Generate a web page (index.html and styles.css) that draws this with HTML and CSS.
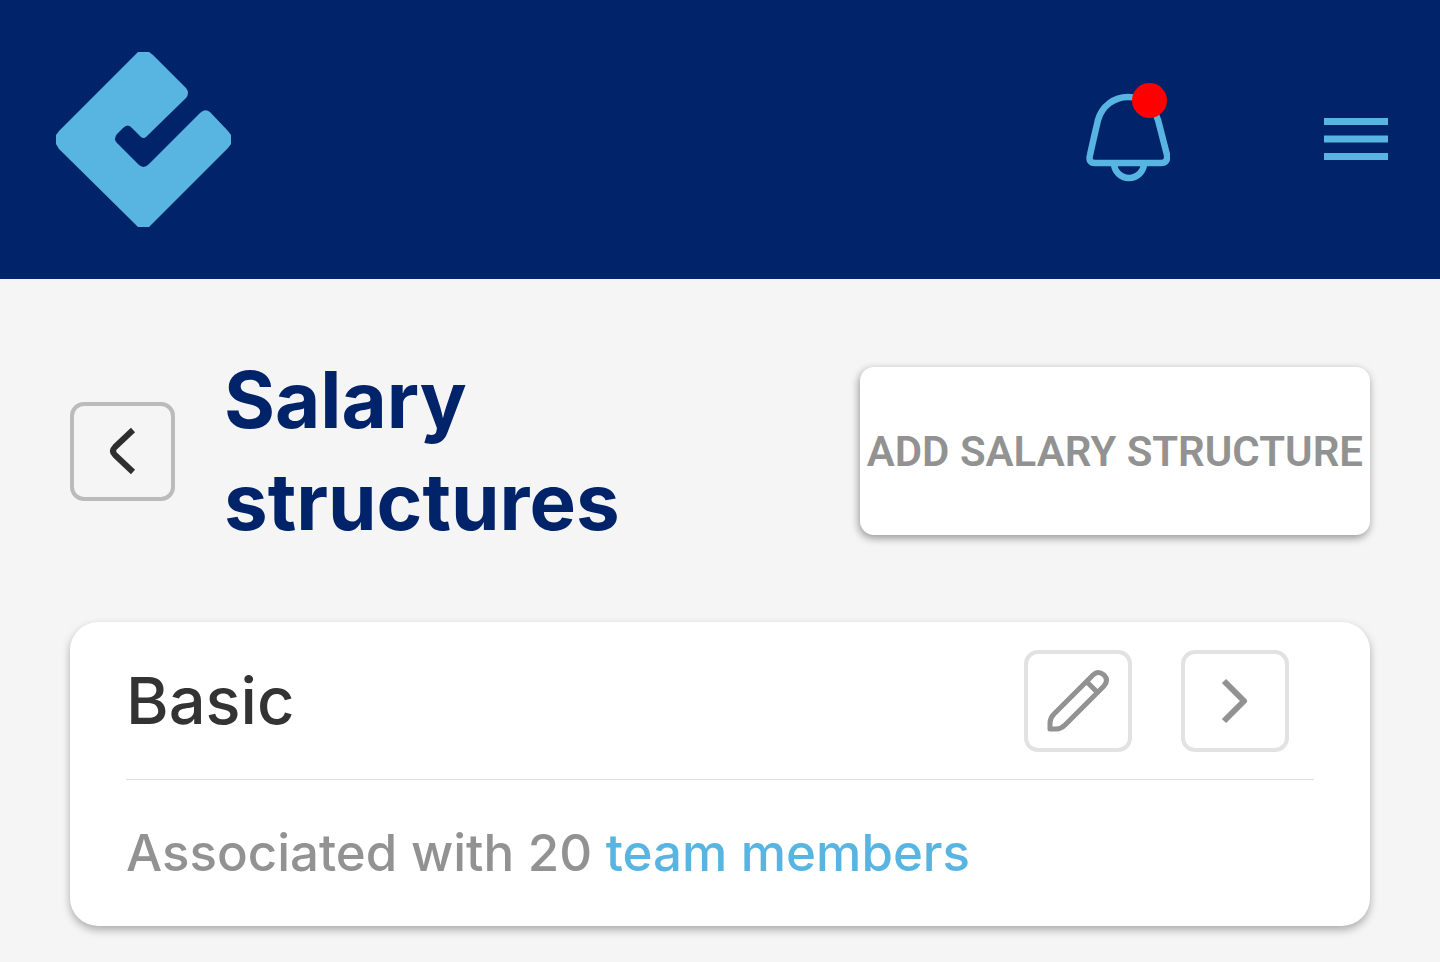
FILE: index.html
```html
<!DOCTYPE html>
<html lang="en">
<head>
<meta charset="utf-8">
<meta name="viewport" content="width=device-width, initial-scale=1">
<title>Salary structures</title>
<link rel="stylesheet" href="styles.css">
</head>
<body>
<header class="topbar">
  <a class="logo" href="#" aria-label="Home">
    <svg width="175" height="175" viewBox="0 0 175 175" aria-hidden="true">
      <path fill="#58b4e0" d="M82 0H93L97 3L130 36Q134 41 130 46L90 85Q87.500 87 85 85L76 76Q72 71 67 76L61 82Q57 87 61 91L82 112Q87.500 118 93 112L144 61Q149 56 154 60L172 79L175 83V92L172 96L97 171L93 175H82L78 171L3 97L0 92V83L3 79L78 4Z"/>
    </svg>
  </a>
  <nav class="topbar-actions" aria-label="Main">
    <button class="plain-button" type="button" aria-label="Notifications">
      <svg width="84" height="99" viewBox="0 0 84 99" aria-hidden="true">
        <g fill="none" stroke="#58b4e0" stroke-width="6.500">
          <path d="M9 80H75Q82 80 81 72L72 37C67 22 57 14 42 14C28 14 16 23 12 37Q8 54 4 72Q2 80 9 80Z"/>
          <path d="M28 80A15 15 0 0 0 58 80"/>
        </g>
        <circle cx="63.500" cy="17.500" r="17.500" fill="#f00"/>
      </svg>
    </button>
    <button class="plain-button" type="button" aria-label="Menu">
      <svg width="64" height="44" viewBox="0 0 64 44" aria-hidden="true">
        <path fill="#58b4e0" d="M0 0H64V7H0ZM0 17.500H64V24.500H0ZM0 35H64V42H0Z"/>
      </svg>
    </button>
  </nav>
</header>
<main class="page">
  <div class="page-head">
    <button class="icon-button back" type="button" aria-label="Back">
      <svg width="28" height="48" viewBox="0 0 28 48" aria-hidden="true">
        <path fill="none" stroke="#2e2e2e" stroke-width="6" stroke-linejoin="round" d="M24 3L6 20Q2 24 6 28L24 45"/>
      </svg>
    </button>
    <h1 class="title">Salary structures</h1>
    <button class="add-button" type="button">ADD SALARY STRUCTURE</button>
  </div>
  <section class="card">
    <div class="card-head">
      <h2 class="card-title">Basic</h2>
      <button class="icon-button" type="button" aria-label="Edit">
        <svg width="64" height="64" viewBox="0 0 64 64" aria-hidden="true">
          <path fill="none" stroke="#929292" stroke-width="5" stroke-linejoin="round" d="M4 60V54Q4 49 8 45L47 6Q52 1 58 6Q63 11 58 17L19 56Q15 60 10 60ZM41 13L51 23"/>
        </svg>
      </button>
      <button class="icon-button" type="button" aria-label="Open">
        <svg width="28" height="48" viewBox="0 0 28 48" aria-hidden="true">
          <path fill="none" stroke="#929292" stroke-width="6" stroke-linejoin="round" d="M3 4L23 24L3 44"/>
        </svg>
      </button>
    </div>
    <p class="card-text">Associated with 20 <a class="link" href="#">team members</a></p>
  </section>
</main>
</body>
</html>
```
FILE: styles.css
```css
* {
  box-sizing: border-box;
}

body {
  margin: 0;
  background: #f5f5f5;
  font-family: Inter, "Liberation Sans", sans-serif;
}

button {
  font: inherit;
  cursor: pointer;
}

svg {
  display: block;
}

.topbar {
  display: flex;
  align-items: center;
  justify-content: space-between;
  padding: 52px 52px 52px 56px;
  background: #002369;
}

.topbar-actions {
  display: flex;
  align-items: center;
  gap: 154px;
}

.plain-button {
  padding: 0;
  border: 0;
  background: none;
}

.topbar-actions .plain-button:first-child {
  padding-bottom: 14px;
}

.page {
  padding: 70px 70px 36px;
}

.page-head {
  display: flex;
  align-items: center;
  margin-bottom: 69px;
}

.icon-button {
  display: flex;
  flex: none;
  align-items: center;
  justify-content: center;
  width: 108px;
  height: 102px;
  padding: 0;
  border: 4px solid #e2e2e2;
  border-radius: 14px;
  background: none;
}

.back {
  width: 105px;
  height: 99px;
  border-color: #bbb;
}

.title {
  flex: 1;
  max-width: 500px;
  margin: 0 auto 0 49px;
  color: #002369;
  font-size: 78px;
  font-weight: 700;
  line-height: 102px;
}

.add-button {
  flex: none;
  min-height: 168px;
  padding: 0 7px;
  border: 0;
  border-radius: 14px;
  background: #fff;
  box-shadow: -1px 3px 9px rgba(0, 0, 0, 0.4);
  color: #929292;
  font-family: Roboto, sans-serif;
  font-size: 42px;
  font-weight: 600;
}

.card {
  padding: 28px 56px 38px;
  border-radius: 28px;
  background: #fff;
  box-shadow: 0 4px 8px rgba(0, 0, 0, 0.3);
}

.card-head {
  display: flex;
  align-items: center;
  gap: 49px;
  padding: 0 25px 27px 0;
  border-bottom: 1px solid #ddd;
}

.card-title {
  flex: 1;
  margin: 0;
  color: #333;
  font-size: 65px;
  font-weight: 500;
  line-height: 84px;
}

.card-text {
  margin: 38px 0 0;
  color: #929292;
  font-size: 51px;
  font-weight: 500;
  line-height: 70px;
}

.link {
  color: #58b4e0;
  text-decoration: none;
}
```
